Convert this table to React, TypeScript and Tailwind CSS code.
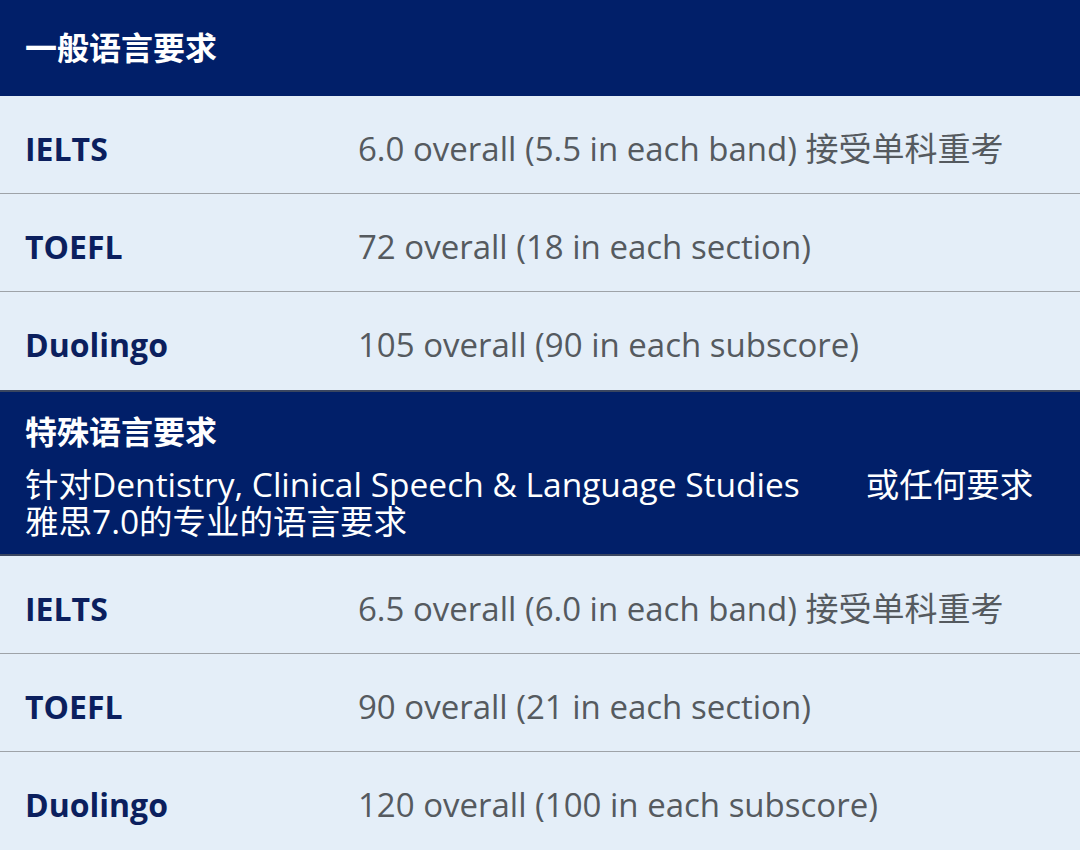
const rows1 = [
  { label: "IELTS", value: "6.0 overall (5.5 in each band) 接受单科重考" },
  { label: "TOEFL", value: "72 overall (18 in each section)" },
  { label: "Duolingo", value: "105 overall (90 in each subscore)" },
];

const rows2 = [
  { label: "IELTS", value: "6.5 overall (6.0 in each band) 接受单科重考" },
  { label: "TOEFL", value: "90 overall (21 in each section)" },
  { label: "Duolingo", value: "120 overall (100 in each subscore)" },
];

const font = { fontFamily: '"Open Sans", "Noto Sans CJK SC", sans-serif' };

function Row({ label, value, last }: { label: string; value: string; last?: boolean }) {
  return (
    <div
      className={`flex h-[98px] items-center bg-[#e4eef8] pt-[8px] ${last ? "" : "border-b border-[#9ea3a8]"}`}
    >
      <div className="w-[358px] shrink-0 pl-[25px] text-[32px] font-bold text-[#0b1f5e]">{label}</div>
      <div className="text-[33px] text-[#555a5f]">{value}</div>
    </div>
  );
}

export default function App() {
  return (
    <div className="h-[850px] w-[1080px] overflow-hidden bg-[#e4eef8]" style={font}>
      {/* 一般 */}
      <div className="flex h-[96px] items-center bg-[#011f69] pl-[25px] text-[32px] font-bold text-white">
        一般语言要求
      </div>
      {rows1.map((r, i) => (
        <Row key={"a" + i} label={r.label} value={r.value} last={i === 2} />
      ))}

      {/* 特殊 */}
      <div className="h-[166px] border-t-2 border-b-2 border-[#3a4660] bg-[#011f69] px-[25px] pt-[14px] text-white">
        <div className="text-[32px] font-bold leading-[52px]">特殊语言要求</div>
        <div className="mt-[8px] text-[33.5px] leading-[37px]">
          针对Dentistry, Clinical Speech &amp; Language Studies<span className="ml-[66px]">或任何要求</span>
        </div>
        <div className="text-[33.5px] leading-[37px]">雅思7.0的专业的语言要求</div>
      </div>
      {rows2.map((r, i) => (
        <Row key={"b" + i} label={r.label} value={r.value} last={i === 2} />
      ))}
    </div>
  );
}
